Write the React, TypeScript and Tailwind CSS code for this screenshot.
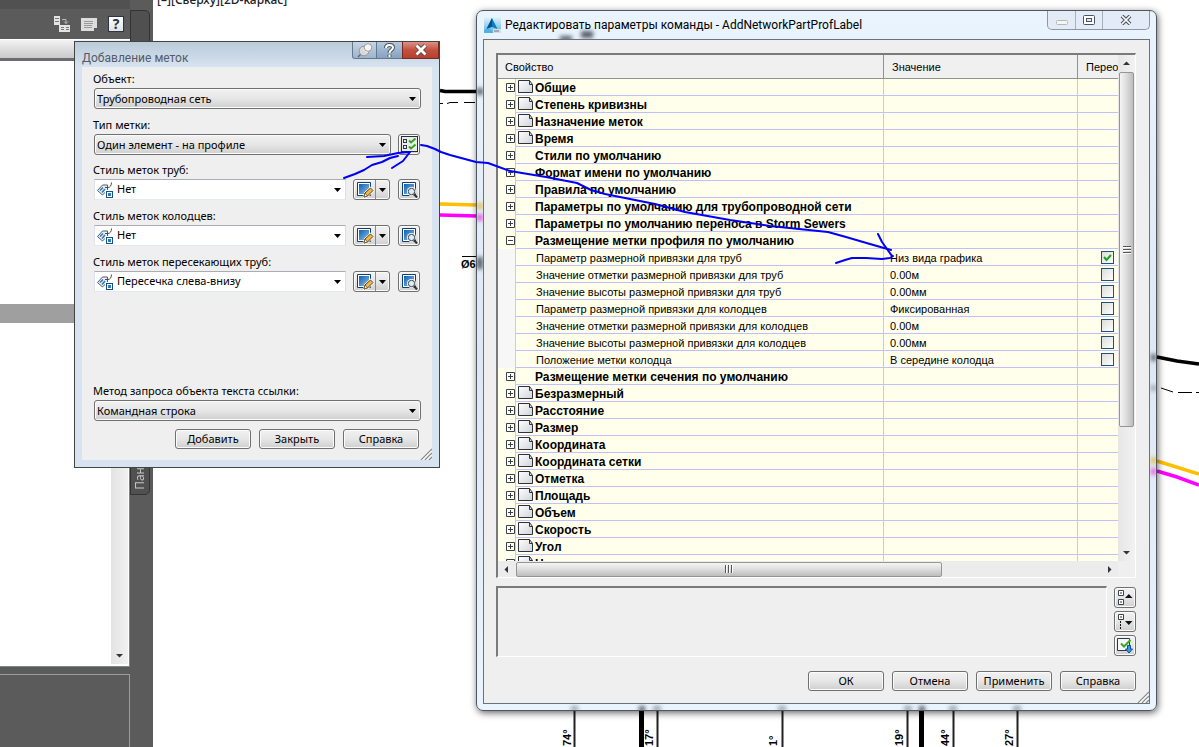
import { useState } from "react";
import type { ReactNode } from "react";

const face =
  "rounded-[3px] border border-[#707070] bg-linear-to-b from-[#f2f2f2] via-[#e6e6e6] to-[#cfcfcf] shadow-[inset_0_0_0_1px_#fbfbfb]";

type RowData = {
  name: string;
  kind: "page" | "group" | "open" | "item";
  value?: string;
  checked?: boolean;
};

const rows: RowData[] = [
  { name: "Общие", kind: "page" },
  { name: "Степень кривизны", kind: "page" },
  { name: "Назначение меток", kind: "page" },
  { name: "Время", kind: "page" },
  { name: "Стили по умолчанию", kind: "group" },
  { name: "Формат имени по умолчанию", kind: "group" },
  { name: "Правила по умолчанию", kind: "group" },
  { name: "Параметры по умолчанию для трубопроводной сети", kind: "group" },
  { name: "Параметры по умолчанию переноса в Storm Sewers", kind: "group" },
  { name: "Размещение метки профиля по умолчанию", kind: "open" },
  { name: "Параметр размерной привязки для труб", kind: "item", value: "Низ вида графика", checked: true },
  { name: "Значение отметки размерной привязки для труб", kind: "item", value: "0.00м" },
  { name: "Значение высоты размерной привязки для труб", kind: "item", value: "0.00мм" },
  { name: "Параметр размерной привязки для колодцев", kind: "item", value: "Фиксированная" },
  { name: "Значение отметки размерной привязки для колодцев", kind: "item", value: "0.00м" },
  { name: "Значение высоты размерной привязки для колодцев", kind: "item", value: "0.00мм" },
  { name: "Положение метки колодца", kind: "item", value: "В середине колодца" },
  { name: "Размещение метки сечения по умолчанию", kind: "group" },
  { name: "Безразмерный", kind: "page" },
  { name: "Расстояние", kind: "page" },
  { name: "Размер", kind: "page" },
  { name: "Координата", kind: "page" },
  { name: "Координата сетки", kind: "page" },
  { name: "Отметка", kind: "page" },
  { name: "Площадь", kind: "page" },
  { name: "Объем", kind: "page" },
  { name: "Скорость", kind: "page" },
  { name: "Угол", kind: "page" },
  { name: "Направление", kind: "page" },
];

function DownArrow() {
  return (
    <svg width="7" height="4" viewBox="0 0 7 4" aria-hidden="true">
      <path d="M0 0h7L3.500 4z" fill="#000" />
    </svg>
  );
}

function Grip() {
  return (
    <svg width="12" height="12" viewBox="0 0 12 12" aria-hidden="true">
      <path d="M1 12 12 1M5 12l7-7M9 12l3-3" stroke="#8b8b8b" strokeWidth="1.3" />
      <path d="M2.500 12 12 2.500M6.500 12 12 6.500" stroke="#fff" />
    </svg>
  );
}

function PushButton({ children }: { children: ReactNode }) {
  return <button className={`h-5 w-[76px] ${face}`}>{children}</button>;
}

function LabelStyleIcon() {
  return (
    <svg width="16" height="16" viewBox="0 0 16 16" fill="none" aria-hidden="true">
      <path d="M.5 8.500 5.500 3h5v5l-5 5z" fill="#e9eef3" stroke="#4d5d6b" />
      <path d="M3 8.500 6 5.500M5 10.500l3-3.500" stroke="#2d75b8" strokeWidth="1.500" />
      <path d="M8 5.500h3c2 0 3.500-2 3.500-5" stroke="#4b4b4b" />
      <rect x="8" y="8" width="8" height="8" fill="#fff" />
      <rect x="9.500" y="9.500" width="6" height="6" stroke="#14508a" />
      <rect x="11" y="11" width="3" height="3" fill="#2b7ac4" />
    </svg>
  );
}

function BlueSquare() {
  return (
    <>
      <defs>
        <linearGradient id="sq" x1="0" y1="0" x2="1" y2="1">
          <stop offset="0" stopColor="#0f5fae" />
          <stop offset="1" stopColor="#8cc0ec" />
        </linearGradient>
      </defs>
      <path d="M1.500 1.500h13v13h-13z" fill="#fff" stroke="#0c3f74" />
      <path d="M3 3h10v10H3z" fill="url(#sq)" />
    </>
  );
}

function EditIcon() {
  return (
    <svg width="18" height="17" viewBox="0 0 18 17" aria-hidden="true">
      <BlueSquare />
      <path d="m8 16 1-4 5.500-5 2.500 2.500-5.500 5.500z" fill="#f5b642" stroke="#fff" strokeWidth="2" />
      <path d="m8 16 1-4 5.500-5 2.500 2.500-5.500 5.500z" fill="#f5b642" stroke="#5a3d14" />
      <path d="m8 16 1-4 2.500 3z" fill="#fff" stroke="#5a3d14" strokeWidth=".7" />
    </svg>
  );
}

function PreviewIcon() {
  return (
    <svg width="17" height="17" viewBox="0 0 17 17" aria-hidden="true">
      <BlueSquare />
      <circle cx="10.500" cy="10.500" r="4.500" fill="#fff" />
      <circle cx="10.500" cy="10.500" r="3.200" fill="#d9edf8" stroke="#444" />
      <path d="m13 13 3 3.500" stroke="#333" strokeWidth="2" />
    </svg>
  );
}

function ChecklistIcon() {
  return (
    <svg width="17" height="17" viewBox="0 0 17 17" fill="none" aria-hidden="true">
      <rect x=".5" y=".5" width="16" height="15" fill="#ebebeb" stroke="#1f2f3f" />
      <rect x="2.500" y="3.500" width="3" height="3" stroke="#2c3540" />
      <rect x="2.500" y="9.500" width="3" height="3" stroke="#2c3540" />
      <path d="m8 4.500 2 2 4.500-4M8 10.500l2 2 4.500-4" stroke="#33a31c" strokeWidth="2" />
    </svg>
  );
}

type PickerProps = {
  id: string;
  label: string;
  value: string;
  flat?: boolean;
  children?: ReactNode;
};

function Picker({ id, label, value, flat, children }: PickerProps) {
  return (
    <div>
      <label htmlFor={id} className="-ml-px block h-4 leading-[14px]">
        {label}
      </label>
      <div className="flex h-[21px] items-center gap-[7px]">
        <div className="grid min-w-0 flex-1 items-center">
          <select
            id={id}
            className={
              flat
                ? "col-start-1 row-start-1 h-[21px] w-full appearance-none border border-t-[#abadb3] border-r-[#dbdfe6] border-b-[#e3e9ef] border-l-[#e2e3ea] bg-white pl-[22px]"
                : `col-start-1 row-start-1 h-[21px] w-full appearance-none pt-px pl-[2px] ${face}`
            }
          >
            <option>{value}</option>
          </select>
          {flat && (
            <span className="pointer-events-none col-start-1 row-start-1 ml-[3px] justify-self-start">
              <LabelStyleIcon />
            </span>
          )}
          <span className="pointer-events-none col-start-1 row-start-1 mr-[5px] justify-self-end">
            <DownArrow />
          </span>
        </div>
        {children}
      </div>
    </div>
  );
}

function StylePicker({ id, label, value }: { id: string; label: string; value: string }) {
  return (
    <Picker id={id} label={label} value={value} flat>
      <div className={`flex h-[21px] w-[37px] ${face}`}>
        <button aria-label="Изменить стиль" className="flex w-[22px] items-center justify-center border-r border-[#8a8a8a]">
          <EditIcon />
        </button>
        <button aria-label="Действия со стилем" className="flex flex-1 items-center justify-center">
          <DownArrow />
        </button>
      </div>
      <button aria-label="Просмотр стиля" className={`mr-px ml-px flex h-[21px] w-[22px] items-center justify-center ${face}`}>
        <PreviewIcon />
      </button>
    </Picker>
  );
}

function AddLabelsDialog() {
  return (
    <section className="absolute top-[41px] left-[74px] w-[366px] border border-[#444] bg-[#d7e3f0] pb-[7px]">
      <header className="flex h-[25px] items-start justify-between bg-linear-to-b from-[#b9cbda] to-[#d7e3f0] pl-[7px]">
        <h2 className="pt-[8px] font-['Roboto',sans-serif] text-[12px] leading-4 text-[#565b66]">Добавление меток</h2>
        <div className="flex h-[17px] text-white">
          <button aria-label="Закрепить" className="flex w-[25px] items-center justify-center rounded-bl-[3px] border border-t-0 border-[#65788c] bg-linear-to-b from-[#c6d5e4] to-[#9db4cd]">
            <svg width="16" height="15" viewBox="0 0 16 15" aria-hidden="true">
              <path d="m1 14 4-4" stroke="#666" strokeWidth="1.500" />
              <circle cx="7" cy="8" r="4.800" fill="#d9d9d9" stroke="#8a8a8a" strokeWidth=".8" />
              <path d="M6 6.500 10 10l3-3-3-4z" fill="#efefef" />
              <circle cx="11" cy="4.500" r="3.800" fill="#f5f5f5" stroke="#8a8a8a" strokeWidth=".8" />
            </svg>
          </button>
          <button aria-label="Справка" className="flex w-[25px] items-center justify-center border-b border-[#65788c] bg-linear-to-b from-[#b4c8dc] to-[#86a2c1]">
            <svg width="11" height="15" viewBox="0 0 11 15" fill="none" aria-hidden="true">
              <path d="M2 5c0-4 7-4 7-.500C9 7 5.500 7 5.500 10M5.500 11.500v2.500" stroke="#4f5661" strokeWidth="4" />
              <path d="M2 5c0-4 7-4 7-.500C9 7 5.500 7 5.500 10M5.500 11.500v2.500" stroke="#fff" strokeWidth="2" />
            </svg>
          </button>
          <button aria-label="Закрыть" className="flex w-[37px] items-center justify-center border border-t-0 border-[#7b2a22] bg-linear-to-b from-[#dc9186] via-[#c4503f] to-[#b5402d]">
            <svg width="14" height="12" viewBox="0 0 14 12" aria-hidden="true">
              <path d="m2.500 1.500 9 9m0-9-9 9" stroke="#5b4541" strokeWidth="4.500" />
              <path d="m2.500 1.500 9 9m0-9-9 9" stroke="#fff" strokeWidth="2.800" />
            </svg>
          </button>
        </div>
      </header>
      <div className="mx-[7px] bg-[#efefef] pt-[5px] pl-3">
        <div className="mr-[11px] flex flex-col gap-[9px]">
          <Picker id="object" label="Объект:" value="Трубопроводная сеть" />
          <Picker id="label-type" label="Тип метки:" value="Один элемент - на профиле">
            <button aria-label="Параметры команды" className={`mr-px flex h-[21px] w-[22px] items-center justify-center ${face}`}>
              <ChecklistIcon />
            </button>
          </Picker>
        </div>
        <div className="mt-2 mr-[11px] flex flex-col gap-[9px]">
          <StylePicker id="pipe-style" label="Стиль меток труб:" value="Нет" />
          <StylePicker id="well-style" label="Стиль меток колодцев:" value="Нет" />
          <StylePicker id="cross-style" label="Стиль меток пересекающих труб:" value="Пересечка слева-внизу" />
        </div>
        <div className="mt-[92px] mr-[11px]">
          <Picker id="query" label="Метод запроса объекта текста ссылки:" value="Командная строка" />
        </div>
        <div className="mt-2 mr-[13px] flex justify-end gap-2">
          <PushButton>Добавить</PushButton>
          <PushButton>Закрыть</PushButton>
          <PushButton>Справка</PushButton>
        </div>
        <div className="-mt-px flex justify-end">
          <Grip />
        </div>
      </div>
    </section>
  );
}

function PageIcon() {
  return (
    <svg width="17" height="14" viewBox="0 0 17 14" fill="none" aria-hidden="true">
      <defs>
        <linearGradient id="page" x1="0" y1="0" x2="1" y2="1">
          <stop offset="0" stopColor="#fff" />
          <stop offset="1" stopColor="#d0d3da" />
        </linearGradient>
      </defs>
      <path d="M1.500.500h11l3 4v8h-14z" fill="url(#page)" stroke="#2e333b" />
      <path d="M12.500.500v4h3" stroke="#2e333b" />
    </svg>
  );
}

function PropertyRow({ row }: { row: RowData }) {
  const [checked, setChecked] = useState(Boolean(row.checked));
  const item = row.kind === "item";
  return (
    <tr className="h-[17px]">
      <td className={item ? "border-r border-[#ffb8b8] bg-[#f7f7f7] p-0" : "border-r border-[#ffb8b8] bg-[#ffffeb] p-0"}>
        {!item && (
          <button aria-label={row.name} className="ml-2 block size-[9px]">
            <svg width="9" height="9" viewBox="0 0 9 9" fill="none" aria-hidden="true">
              <path d={row.kind === "open" ? "M.5.500h8v8h-8zM2 4.500h5" : "M.5.500h8v8h-8zM2 4.500h5M4.500 2v5"} stroke="#3a3f4c" />
            </svg>
          </button>
        )}
      </td>
      <td className="border-r border-b border-r-[#ffb8b8] border-b-[#c0c0ff] bg-[#ffffeb] p-0">
        <div className={item ? "flex h-4 items-center pl-5" : "flex h-4 items-center text-[12px] font-bold"}>
          <span className={row.kind === "page" ? "w-[19px] pl-px" : item ? "hidden" : "w-[19px]"}>
            {row.kind === "page" && <PageIcon />}
          </span>
          <span className="pt-0.5 leading-[14px] whitespace-nowrap">{row.name}</span>
        </div>
      </td>
      <td className="border-r border-b border-r-[#ffb8b8] border-b-[#c0c0ff] bg-[#ffffeb] p-0 pl-1.5">
        <div className="h-4 pt-0.5 leading-[14px]">{row.value}</div>
      </td>
      <td className="border-b border-[#c0c0ff] bg-[#ffffeb] p-0">
        {item && (
          <div className="mr-1 ml-auto grid size-[13px]">
            <input
              type="checkbox"
              aria-label={`Переопределить: ${row.name}`}
              checked={checked}
              onChange={(e) => setChecked(e.target.checked)}
              className="col-start-1 row-start-1 size-[13px] appearance-none border border-[#1c5180] bg-linear-to-br from-[#dcdcd7] to-white"
            />
            {checked && (
              <svg className="pointer-events-none col-start-1 row-start-1" width="13" height="13" viewBox="0 0 13 13" fill="none">
                <path d="m3 6 2.500 3L10 4" stroke="#21a121" strokeWidth="2" />
              </svg>
            )}
          </div>
        )}
      </td>
    </tr>
  );
}

function ScrollArrow({ label, d }: { label: string; d: string }) {
  return (
    <button aria-label={label} className="flex size-[17px] items-center justify-center">
      <svg width="7" height="7" viewBox="0 0 7 7" aria-hidden="true">
        <path d={d} fill="#333" />
      </svg>
    </button>
  );
}

function PropertyGrid() {
  return (
    <div className="grid grid-cols-[minmax(0,1fr)_17px] border-t-2 border-r border-b border-l-2 border-t-[#7a7a7a] border-r-white border-b-white border-l-[#7a7a7a] font-['Liberation_Sans',sans-serif]">
      <div className="h-[506px] overflow-hidden bg-[#ffffeb]">
        <table className="w-full table-fixed border-separate border-spacing-0">
          <colgroup>
            <col className="w-[18px]" />
            <col className="w-[368px]" />
            <col className="w-[194px]" />
            <col />
          </colgroup>
          <thead>
            <tr className="h-6 bg-[#f0f0f0] text-left">
              <th colSpan={2} className="border-r border-b border-[#919191] p-0 pt-0.5 pl-[7px] font-normal">Свойство</th>
              <th className="border-r border-b border-[#919191] p-0 pt-0.5 pl-2 font-normal">Значение</th>
              <th className="overflow-hidden border-b border-[#919191] p-0 pt-0.5 pl-2 font-normal">Перео</th>
            </tr>
          </thead>
          <tbody>
            {rows.map((row) => (
              <PropertyRow key={row.name} row={row} />
            ))}
          </tbody>
        </table>
      </div>
      <div className="flex flex-col items-center bg-linear-to-r from-[#e6e6e6] to-[#f2f2f2]">
        <ScrollArrow label="Вверх" d="M0 5h7L3.500 1.500z" />
        <div className="flex h-[355px] w-[15px] flex-col items-center justify-center gap-px rounded-[2px] border border-[#959595] bg-linear-to-r from-[#f5f5f5] via-[#dcdcdc] to-[#bdbdbd]">
          <i className="h-0.5 w-2 border-b border-white bg-[#555]" />
          <i className="h-0.5 w-2 border-b border-white bg-[#555]" />
          <i className="h-0.5 w-2 border-b border-white bg-[#555]" />
        </div>
        <div className="flex-1" />
        <ScrollArrow label="Вниз" d="M0 2h7L3.500 5.500z" />
      </div>
      <div className="flex h-4 items-center bg-[#ececec]">
        <ScrollArrow label="Влево" d="M5 0v7L1.500 3.500z" />
        <div className="ml-px flex h-[15px] w-[426px] items-center justify-center gap-px rounded-[2px] border border-[#959595] bg-linear-to-b from-[#f5f5f5] via-[#dcdcdc] to-[#bdbdbd]">
          <i className="h-2 w-0.5 border-r border-white bg-[#555]" />
          <i className="h-2 w-0.5 border-r border-white bg-[#555]" />
          <i className="h-2 w-0.5 border-r border-white bg-[#555]" />
        </div>
        <div className="flex-1" />
        <ScrollArrow label="Вправо" d="M2 0v7l3.500-3.500z" />
      </div>
      <div className="bg-[#efefef]" />
    </div>
  );
}

function AppIcon() {
  return (
    <svg width="17" height="16" viewBox="0 0 17 16" aria-hidden="true">
      <defs>
        <linearGradient id="app" x1="0" y1="0" x2="0" y2="1">
          <stop offset="0" stopColor="#e4f3fb" />
          <stop offset="1" stopColor="#55b3e4" />
        </linearGradient>
      </defs>
      <path d="M0 0h17v16H0z" fill="url(#app)" />
      <path d="m8 1 5.500 11-5.500-2-5.500 2z" fill="#0b7cc4" />
      <path d="M8 1 2.500 12 8 9.500z" fill="#07518c" />
      <path d="m0 13 5-2 4 5H0z" fill="#4fb0e2" />
      <path d="M9 12h8v4H9z" fill="#d7dde2" />
      <path d="M10 14h5" stroke="#777" />
    </svg>
  );
}

// what shows through the glass frame of the window
function GlassSmudges() {
  return (
    <svg className="pointer-events-none absolute inset-0 size-full" aria-hidden="true">
      <defs>
        <filter id="soft" x="-100%" y="-100%" width="300%" height="300%">
          <feGaussianBlur stdDeviation="2" />
        </filter>
      </defs>
      <g filter="url(#soft)">
        <g fill="#56616b">
          <path d="M0 77h6v7H0zM0 246h6v12H0zM674 343h5v7h-5zM83 25h12v5H83zM104 20h12v7h-12z" />
          <path d="M162 695h6v6h-6z" />
          <path d="M442 695h6v6h-6z" />
        </g>
        <path d="M94 695h7v5h-7zM176 695h8v5h-8zM301 695h8v5h-8zM427 695h8v5h-8zM472 695h8v5h-8zM536 695h8v5h-8zM674 374h5v6h-5z" fill="#9aa3ac" />
        <path d="M0 192h6v6H0zM674 446h5v7h-5z" fill="#e0c04a" />
        <path d="M0 203h6v7H0zM674 457h5v7h-5z" fill="#e85ae8" />
      </g>
    </svg>
  );
}

function EditSettingsDialog() {
  return (
    <section className="absolute top-[10px] left-[476px] w-[681px] overflow-hidden rounded-[7px] border border-[#50565c] bg-linear-to-b from-[#e9f4fe] via-[#dce8f4] to-[#e9f4fe] px-1.5 pb-1.5 shadow-[1px_2px_7px_rgba(0,0,0,0.6)]">
      <GlassSmudges />
      <header className="relative flex h-7 items-start">
        <span className="mt-1.5 ml-px">
          <AppIcon />
        </span>
        <h2 className="mt-1.5 ml-1 flex-1 font-['Roboto',sans-serif] text-[12px] leading-4 whitespace-nowrap text-black">
          Редактировать параметры команды - AddNetworkPartProfLabel
        </h2>
        <div className="flex h-[19px] rounded-b-[5px] border border-t-0 border-[#8d98a5] bg-[#e3ecf6]">
          <button aria-label="Свернуть" className="flex w-7 items-center justify-center border-r border-[#a7b1bd]">
            <svg width="12" height="5" viewBox="0 0 12 5" className="mt-1">
              <rect x=".5" y=".5" width="11" height="4" rx="1" fill="#f5f5f5" stroke="#b5b8bb" />
            </svg>
          </button>
          <button aria-label="Развернуть" className="flex w-[27px] items-center justify-center border-r border-[#a7b1bd]">
            <svg width="12" height="10" viewBox="0 0 12 10">
              <rect x=".5" y=".5" width="11" height="9" rx="1" fill="#fff" stroke="#4c5266" />
              <rect x="3.500" y="3.500" width="5" height="3" fill="#dfe6ee" stroke="#4c5266" />
            </svg>
          </button>
          <button aria-label="Закрыть" className="flex w-[46px] items-center justify-center">
            <svg width="12" height="10" viewBox="0 0 12 10">
              <path d="m2 1 8 8m0-8L2 9" stroke="#4c5266" strokeWidth="3.800" />
              <path d="m2 1 8 8m0-8L2 9" stroke="#fff" strokeWidth="1.700" />
            </svg>
          </button>
        </div>
      </header>
      <div className="relative border border-[#6b7378] bg-[#efefef] pt-[13px] pl-3">
        <div className="mr-[13px]">
          <PropertyGrid />
          <div className="mt-2 flex gap-[7px]">
            <div className="h-[71px] flex-1 border-t-2 border-r border-b border-l-2 border-t-[#7a7a7a] border-r-white border-b-white border-l-[#7a7a7a] bg-[#efefef]" />
            <div className="flex flex-col gap-[3px] pt-px">
              <button aria-label="Свернуть все категории" className={`flex h-[21px] w-[22px] items-center justify-center ${face}`}>
                <svg width="16" height="17" viewBox="0 0 16 17" fill="none">
                  <path d="M1.500 1.500h5v5h-5zM1.500 10.500h5v5h-5z" fill="#fff" stroke="#3b434e" />
                  <path d="M3.500 3.500h1v1h-1zM3.500 12.500h1v1h-1z" stroke="#777" />
                  <path d="M8 9h7.500L11.800 5z" fill="#111" />
                </svg>
              </button>
              <button aria-label="Развернуть все категории" className={`flex h-[21px] w-[22px] items-center justify-center ${face}`}>
                <svg width="16" height="17" viewBox="0 0 16 17" fill="none">
                  <path d="M1.500 1.500h5v5h-5z" fill="#fff" stroke="#3b434e" />
                  <path d="M3.500 3.500h1v1h-1z" stroke="#777" />
                  <path d="M3.500 8v8" stroke="#111" strokeDasharray="2 1" />
                  <path d="M8 8h7.500l-3.700 4z" fill="#111" />
                </svg>
              </button>
              <button aria-label="Переопределить все" className={`flex h-[21px] w-[22px] items-center justify-center ${face}`}>
                <svg width="18" height="17" viewBox="0 0 18 17" fill="none">
                  <path d="M1.500 1.500h12v12h-12z" fill="#f3f6fa" stroke="#26384c" />
                  <path d="m5 6.500 3 3L14.500 3" stroke="#3aa81c" strokeWidth="2" />
                  <path d="M11.500 8.500h3v3.500h2l-3.500 4-3.500-4h2z" fill="#3a97e8" stroke="#0f4f94" />
                </svg>
              </button>
            </div>
          </div>
          <div className="mt-[14px] flex justify-end gap-2">
            <PushButton>ОК</PushButton>
            <PushButton>Отмена</PushButton>
            <PushButton>Применить</PushButton>
            <PushButton>Справка</PushButton>
          </div>
        </div>
        <div className="flex justify-end">
          <Grip />
        </div>
      </div>
    </section>
  );
}

function ToolPalette() {
  return (
    <aside className="relative flex h-screen w-[153px] bg-[#5b5b5b]">
      <div className="flex w-[130px] flex-col">
        <div className="h-[9px] bg-[#515151]" />
        <div className="flex h-[30px] items-center justify-end gap-[11px] pr-1.5">
          <svg width="16" height="16" viewBox="0 0 16 16" fill="none" aria-hidden="true">
            <path d="M0 0h6v9H0zM5 9h11v7H5z" fill="#e4e4e4" />
            <path d="M1 2.500h4M1 5.500h4M7 11.500h3M7 13.500h3M12 11.500h3M12 13.500h3" stroke="#777" />
            <path d="M8 3.500h4v4M10 5.500l2 2 2-2" stroke="#b8b8b8" />
          </svg>
          <svg width="16" height="13" viewBox="0 0 16 13" fill="none" aria-hidden="true">
            <path d="M0 0h16v10h-3v3H0z" fill="#ddd" />
            <path d="M3 3.500h9M3 5.500h9M3 7.500h8M3 9.500h8" stroke="#999" />
          </svg>
          <button aria-label="Справка" className="flex size-4 items-center justify-center border border-[#2f3440] bg-linear-to-b from-white to-[#dfe2e8] text-[14px] leading-4 font-bold text-[#2f3440]">
            ?
          </button>
        </div>
        <div className="h-[19px] border-t border-white bg-linear-to-b from-[#f3f3f3] to-[#c9c9c9]" />
        <div className="h-[3px] bg-[#6a6a70]" />
        <div className="flex flex-1 justify-end border-r border-b border-[#7c818b] bg-white">
          <div className="flex-1 pt-[243px]">
            <div className="h-[19px] bg-[#9f9f9f]" />
          </div>
          <div className="mr-px mb-0.5 flex w-[17px] flex-col justify-end bg-linear-to-r from-[#e3e3e3] to-[#f1f1f1]">
            <ScrollArrow label="Прокрутить вниз" d="M0 2h7L3.500 5.500z" />
          </div>
        </div>
        <div className="mt-[7px] h-[73px] border-t border-r border-[#9c9c9c]" />
      </div>
      <div className="mt-2.5 flex h-[485px] w-5 items-end justify-center rounded-r-[5px] border border-[#333] bg-[#505050] pb-1">
        <span className="rotate-180 text-[12px] leading-4 text-[#c4c4c4] [writing-mode:vertical-rl]">Пан</span>
      </div>
    </aside>
  );
}

const bearings = [
  { x: 571, text: "74°" },
  { x: 653, text: "17°" },
  { x: 777, text: "1°" },
  { x: 903, text: "19°" },
  { x: 949, text: "44°" },
  { x: 1013, text: "27°" },
];

function Drawing() {
  return (
    <svg className="absolute inset-0 size-full" fill="none" aria-hidden="true">
      <text x="157" y="4" fill="#222" className="font-['Noto_Sans',sans-serif] text-[12px] font-medium">
        [&#8211;][Сверху][2D-каркас]
      </text>
      <path d="M440 90.500l5 1h32M1157 357l20 4 22 3" stroke="#000" strokeWidth="3.500" />
      <path d="M440 103.500h3M447 103.500l3-1h8M464 102.500h11M1161 388l6 2 6 2M1178 392.500h14M1196 392.500h3" stroke="#000" />
      <path d="M440 204l37 1M1157 461l42 13" stroke="#ffbf00" strokeWidth="3.500" />
      <path d="M440 215l37 1M1157 471l20 6 22 8" stroke="#ff00ff" strokeWidth="3.500" />
      <path d="M462 256.500h14" stroke="#000" />
      <text x="461" y="268" fill="#000" className="font-['Liberation_Sans',sans-serif] text-[11px] font-bold">
        Ø6
      </text>
      <path d="M574.500 711v36M657.500 711v36M782.500 711v36M907.500 711v36M953.500 711v36M1017.500 711v36" stroke="#222" strokeWidth="2" />
      <path d="M641.500 711v36M921.500 711v36" stroke="#000" strokeWidth="5" />
      {bearings.map((b) => (
        <text key={b.x} transform={`translate(${b.x} 746) rotate(-90)`} fill="#000" className="font-['Liberation_Sans',sans-serif] text-[11px] font-bold">
          {b.text}
        </text>
      ))}
    </svg>
  );
}

function PenMarks() {
  return (
    <svg className="pointer-events-none absolute inset-0 size-full" fill="none" aria-hidden="true">
      <g stroke="#0000f5" strokeWidth="2" strokeLinecap="round" strokeLinejoin="round">
        <path d="M344 178l11-4 9-4 8-5 10-3 8-4 8-2M367 157l17-1 14-3 12-1M392 168l11-7 7-9" />
        <path d="M421 145l6 1 8 3 6 3 9 3 26 7 12 1 22 8 36 6 31 6 14 7 14 4 50 10 30 8 45 8 40 6 58 6 18 5 24 7 21 6" />
        <path d="M878 234l4 8 5 7 5 7M836 263l9-3 7-2h14l16 1 8-1 3-2" />
      </g>
    </svg>
  );
}

export default function App() {
  return (
    <main className="relative h-screen overflow-hidden bg-white font-['Noto_Sans',sans-serif] text-[11px] text-black">
      <Drawing />
      <ToolPalette />
      <AddLabelsDialog />
      <EditSettingsDialog />
      <PenMarks />
    </main>
  );
}
